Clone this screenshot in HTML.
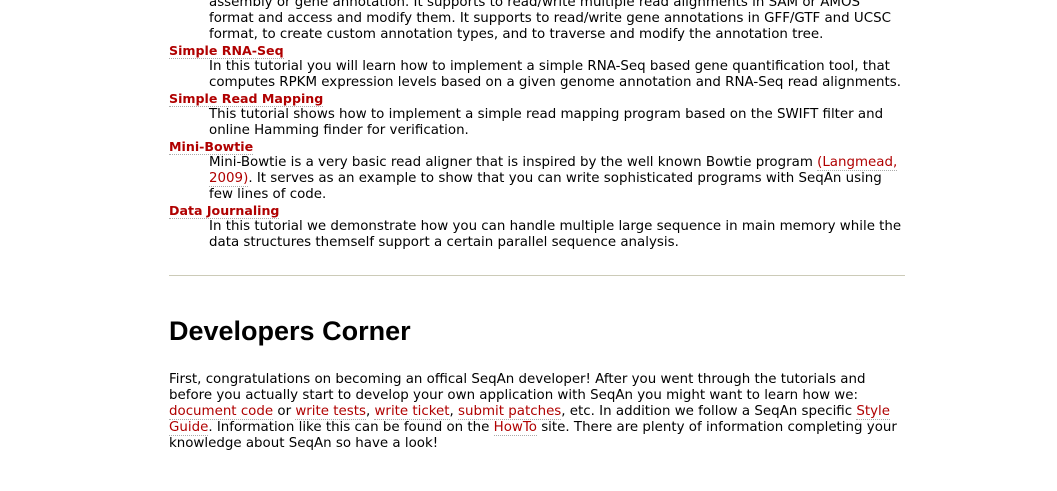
<!DOCTYPE html>
<html><head><meta charset="utf-8"><style>
body{margin:0;background:#fff;width:1057px;height:490px;overflow:hidden;position:relative;font-family:Verdana,"DejaVu Sans",sans-serif;font-size:13.4px;color:#000}
#w{position:absolute;left:0;top:1px;width:1057px;height:490px}
.l{position:absolute;white-space:nowrap;line-height:16px;height:16px}
.d{left:209px}.t{left:169px;font-weight:bold;font-size:12.6px}
a{color:#b00000;text-decoration:none;border-bottom:1px dotted #aaa}
hr{position:absolute;left:169px;top:274px;width:736px;margin:0;border:0;border-top:1px solid #cccbb8}
h1{position:absolute;left:169px;top:313px;margin:0;font:bold 27px "Liberation Sans",Arial,sans-serif;line-height:34px}
</style></head><body><div id="w">
<div class="l d" style="top:-6px">assembly or gene annotation. It supports to read/write multiple read alignments in SAM or AMOS</div>
<div class="l d" style="top:10px">format and access and modify them. It supports to read/write gene annotations in GFF/GTF and UCSC</div>
<div class="l d" style="top:26px">format, to create custom annotation types, and to traverse and modify the annotation tree.</div>
<div class="l t" style="top:42px"><a>Simple RNA-Seq</a></div>
<div class="l d" style="top:58px">In this tutorial you will learn how to implement a simple RNA-Seq based gene quantification tool, that</div>
<div class="l d" style="top:74px">computes RPKM expression levels based on a given genome annotation and RNA-Seq read alignments.</div>
<div class="l t" style="top:90px"><a>Simple Read Mapping</a></div>
<div class="l d" style="top:106px">This tutorial shows how to implement a simple read mapping program based on the SWIFT filter and</div>
<div class="l d" style="top:122px">online Hamming finder for verification.</div>
<div class="l t" style="top:138px"><a>Mini-Bowtie</a></div>
<div class="l d" style="top:154px">Mini-Bowtie is a very basic read aligner that is inspired by the well known Bowtie program <a>(Langmead,</a></div>
<div class="l d" style="top:170px"><a>2009)</a>. It serves as an example to show that you can write sophisticated programs with SeqAn using</div>
<div class="l d" style="top:186px">few lines of code.</div>
<div class="l t" style="top:202px"><a>Data Journaling</a></div>
<div class="l d" style="top:218px">In this tutorial we demonstrate how you can handle multiple large sequence in main memory while the</div>
<div class="l d" style="top:234px">data structures themself support a certain parallel sequence analysis.</div>
<hr>
<h1>Developers Corner</h1>
<div class="l" style="left:169px;top:371px">First, congratulations on becoming an offical SeqAn developer! After you went through the tutorials and</div>
<div class="l" style="left:169px;top:387px">before you actually start to develop your own application with SeqAn you might want to learn how we:</div>
<div class="l" style="left:169px;top:403px"><a>document code</a> or <a>write tests</a>, <a>write ticket</a>, <a>submit patches</a>, etc. In addition we follow a SeqAn specific <a>Style</a></div>
<div class="l" style="left:169px;top:419px"><a>Guide</a>. Information like this can be found on the <a>HowTo</a> site. There are plenty of information completing your</div>
<div class="l" style="left:169px;top:435px">knowledge about SeqAn so have a look!</div>
</div></body></html>
